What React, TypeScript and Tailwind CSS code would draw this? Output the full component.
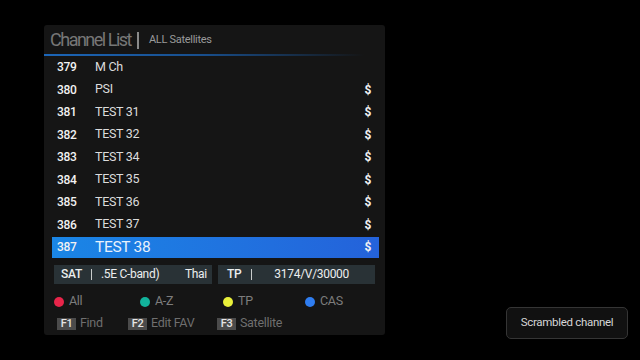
const channels = [
    { no: 379, name: "M Ch", cas: false },
    { no: 380, name: "PSI", cas: true },
    { no: 381, name: "TEST 31", cas: true },
    { no: 382, name: "TEST 32", cas: true },
    { no: 383, name: "TEST 34", cas: true },
    { no: 384, name: "TEST 35", cas: true },
    { no: 385, name: "TEST 36", cas: true },
    { no: 386, name: "TEST 37", cas: true },
    { no: 387, name: "TEST 38", cas: true },
];

const legend = [
    { label: "All", dot: "bg-[#e8254a]", w: "w-[86px]" },
    { label: "A-Z", dot: "bg-[#12b39c]", w: "w-[83px]" },
    { label: "TP", dot: "bg-[#e9f03a]", w: "w-[82px]" },
    { label: "CAS", dot: "bg-[#2f7df0]", w: "w-[80px]" },
];

const keys = [
    { key: "F1", label: "Find", w: "w-[71px]" },
    { key: "F2", label: "Edit FAV", w: "w-[89px]" },
    { key: "F3", label: "Satellite", w: "w-[80px]" },
];

export default function App() {
    const selected = 387;
    return (
        <div className="relative w-[640px] h-[360px] bg-black overflow-hidden font-['Roboto',sans-serif] tracking-[-0.3px]">
            <div className="ml-[44px] pt-[25px]">
                <div className="w-[341px] h-[310px] bg-[#151515] rounded-[3px] flex flex-col">
                    <Header />
                    <div className="px-[8px] pr-[6px]">
                        {channels.map(ch => (
                            <ChannelRow key={ch.no} {...ch} active={ch.no === selected} />
                        ))}
                    </div>
                    <div className="flex gap-[6px] pl-[10px] mt-[6px]">
                        <div className="w-[158px] h-[19px] bg-[#293236] flex items-center text-[12px] text-[#eceeef] whitespace-nowrap">
                            <span className="pl-[7px] font-medium">SAT</span>
                            <span className="ml-[9px] w-[1px] h-[11px] bg-[#c8cccc]" />
                            <span className="ml-[9px] w-[84px]">.5E C-band)</span>
                            <span>Thai</span>
                        </div>
                        <div className="w-[157px] h-[19px] bg-[#293236] flex items-center text-[12px] text-[#eceeef] whitespace-nowrap">
                            <span className="pl-[9px] font-medium">TP</span>
                            <span className="ml-[10px] w-[1px] h-[11px] bg-[#c8cccc]" />
                            <span className="flex-1 text-center pr-[4px]">3174/V/30000</span>
                        </div>
                    </div>
                    <div className="flex items-center pl-[10px] mt-[10px] h-[16px]">
                        {legend.map(l => (
                            <div key={l.label} className={`${l.w} flex items-center gap-[5px]`}>
                                <span className={`w-[10px] h-[10px] rounded-full ${l.dot}`} />
                                <span className="text-[12.5px] text-[#7d7d7d]">{l.label}</span>
                            </div>
                        ))}
                    </div>
                    <div className="flex items-center pl-[13px] mt-[7px] h-[14px]">
                        {keys.map(k => (
                            <div key={k.key} className={`${k.w} flex items-center gap-[4px]`}>
                                <span className="w-[19px] h-[12px] bg-[#4b4b4b] text-[#e6e6e6] text-[11px] font-medium leading-none flex items-center justify-center">{k.key}</span>
                                <span className="text-[12.5px] text-[#6f6f6f]">{k.label}</span>
                            </div>
                        ))}
                    </div>
                </div>
            </div>
            <div className="absolute left-[506px] top-[307px] w-[122px] h-[32px] rounded-[5px] border border-[#353535] bg-[#111111] flex items-center justify-center text-[11.5px] text-[#d6d6d6]">
                Scrambled channel
            </div>
        </div>
    );
}

function Header() {
    return (
        <div>
            <div className="h-[29px] flex items-center pl-[6px] pt-[1px]">
                <span className="text-[18px] text-[#777777] leading-none tracking-[-1.5px]">Channel List</span>
                <span className="ml-[6px] w-[2px] h-[17px] bg-[#8a8a8a]" />
                <span className="ml-[10px] text-[11px] text-[#9a9a9a]">ALL Satellites</span>
            </div>
            <div className="h-[2px] w-[320px] bg-gradient-to-r from-[#1c66b8] via-[#184e8c] to-transparent" />
        </div>
    );
}

function ChannelRow({ no, name, cas, active }: { no: number; name: string; cas: boolean; active: boolean }) {
    return (
        <div className="h-[22.5px] py-[1px]">
            <div className={`h-full flex items-center ${active ? "bg-gradient-to-r from-[#1a86e6] to-[#2462da]" : ""}`}>
                <span className="w-[43px] pl-[5px] text-[12px] text-[#f2f2f2] font-medium">{no}</span>
                <span className={`flex-1 ${active ? "text-[15.5px] text-[#e8f1fc]" : "text-[12.5px] text-[#dcdcdc]"}`}>{name}</span>
                {cas && <span className="pr-[8px] text-[12px] text-[#f2f2f2] font-bold">$</span>}
            </div>
        </div>
    );
}
